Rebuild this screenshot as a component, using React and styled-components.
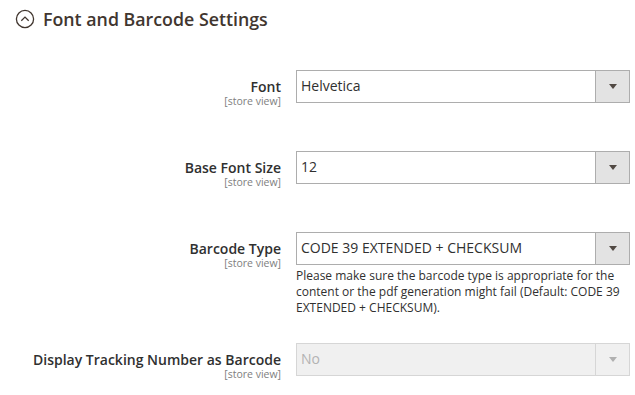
import React from "react";
import styled, { createGlobalStyle } from "styled-components";

const Global = createGlobalStyle`
  body {
    margin: 0;
    background: #fff;
    font-family: "Open Sans", "Liberation Sans", sans-serif;
    color: #303030;
  }
`;

const Page = styled.div`
  width: 635px;
  height: 395px;
  overflow: hidden;
  box-sizing: border-box;
  padding: 6px 5px 0 0;
`;

const Heading = styled.div`
  display: flex;
  align-items: center;
  gap: 8px;
  padding-left: 15px;
  height: 26px;
  font-size: 17.8px;
  font-weight: 600;
  color: #41362f;
  margin-bottom: 38px;
`;

const Fields = styled.div`
  display: flex;
  flex-direction: column;
`;

const Row = styled.div`
  display: grid;
  grid-template-columns: 281px 334px;
  column-gap: 15px;
  align-items: start;
  margin-bottom: ${(p) => p.$space}px;
`;

const Label = styled.div`
  text-align: right;
  padding-top: 9px;
  font-size: 14px;
  font-weight: 600;
  line-height: 16px;
`;

const Scope = styled.div`
  font-size: 10.5px;
  font-weight: 400;
  color: #808080;
  line-height: 13px;
`;

const Select = styled.div`
  display: flex;
  height: 33px;
  box-sizing: border-box;
  border: 1px solid ${(p) => (p.$disabled ? "#d6d6d6" : "#adadad")};
  background: ${(p) => (p.$disabled ? "#f0f0f0" : "#fff")};
  color: ${(p) => (p.$disabled ? "#b3b3b3" : "#303030")};
  font-size: 14px;
`;

const Value = styled.div`
  flex: 1;
  display: flex;
  align-items: center;
  padding-left: 4px;
  padding-bottom: 2px;
`;

const Arrow = styled.div`
  width: 33px;
  display: flex;
  align-items: center;
  justify-content: center;
  border-left: 1px solid ${(p) => (p.$disabled ? "#d6d6d6" : "#adadad")};
  background: ${(p) => (p.$disabled ? "#f0f0f0" : "#e3e3e3")};

  &::after {
    content: "";
    border-left: 4px solid transparent;
    border-right: 4px solid transparent;
    border-top: 5px solid ${(p) => (p.$disabled ? "#b0b0b0" : "#514943")};
  }
`;

const Note = styled.div`
  margin-top: 3px;
  font-size: 12px;
  line-height: 16px;
  color: #303030;
`;

const CollapseIcon = () => (
  <svg width="20" height="20" viewBox="0 0 20 20">
    <circle cx="10" cy="10" r="8.6" fill="none" stroke="#41362f" strokeWidth="1.3" />
    <path d="M6.3 11.8 L10 8.1 L13.7 11.8" fill="none" stroke="#41362f" strokeWidth="1.3" />
  </svg>
);

const fields = [
  { label: "Font", value: "Helvetica", space: 43 },
  { label: "Base Font Size", value: "12", space: 43 },
  {
    label: "Barcode Type",
    value: "CODE 39 EXTENDED + CHECKSUM",
    note: "Please make sure the barcode type is appropriate for the content or the pdf generation might fail (Default: CODE 39 EXTENDED + CHECKSUM).",
    space: 27,
  },
  { label: "Display Tracking Number as Barcode", value: "No", disabled: true, space: 0 },
];

export default function App() {
  return (
    <>
      <Global />
      <Page>
        <Heading>
          <CollapseIcon />
          Font and Barcode Settings
        </Heading>
        <Fields>
          {fields.map((f) => (
            <Row key={f.label} $space={f.space}>
              <Label>
                {f.label}
                <Scope>[store view]</Scope>
              </Label>
              <div>
                <Select $disabled={f.disabled}>
                  <Value>{f.value}</Value>
                  <Arrow $disabled={f.disabled} />
                </Select>
                {f.note && <Note>{f.note}</Note>}
              </div>
            </Row>
          ))}
        </Fields>
      </Page>
    </>
  );
}
